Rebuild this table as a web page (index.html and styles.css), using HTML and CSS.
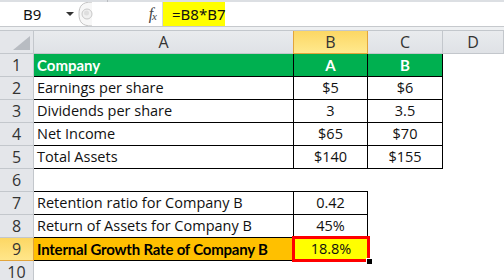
FILE: index.html
```html
<!DOCTYPE html>
<html>
<head>
<meta charset="utf-8">
<link rel="stylesheet" href="styles.css">
</head>
<body>
<div class="ribbon-edge"><span class="ribbon-split"></span></div>
<div class="fbar">
  <div class="namebox"><span class="name">B9</span><span class="drop"></span></div>
  <div class="grip"><svg width="16" height="24" viewBox="0 0 16 24"><path d="M14 0 C4 0 1 4 1 12 C1 20 4 24 14 24" fill="#f7f7f7" stroke="#c4c4c4" stroke-width="1"/><circle cx="9" cy="12" r="5" fill="#f0f0f0" stroke="#c8c8c8"/><circle cx="8.5" cy="11" r="2.5" fill="#dedede"/></svg></div>
  <div class="fxzone"><span class="fx">f<sub>x</sub></span></div>
  <div class="formula">=B8*B7</div>
  <div class="rest"></div>
</div>
<div class="band"></div>
<div class="sheet">
  <div class="corner"><svg width="17" height="14" viewBox="0 0 17 14"><polygon points="17,0 17,14 0,14" fill="#b8bcc2"/></svg></div>
  <div class="ch">A</div>
  <div class="ch sel">B</div>
  <div class="ch">C</div>
  <div class="ch">D</div>

  <div class="rh">1</div>
  <div class="cell tl green bold">Company</div>
  <div class="cell num green bold">A</div>
  <div class="cell num green bold">B</div>
  <div class="cell blank"></div>

  <div class="rh">2</div>
  <div class="cell tl">Earnings per share</div>
  <div class="cell num">$5</div>
  <div class="cell num">$6</div>
  <div class="cell blank"></div>

  <div class="rh">3</div>
  <div class="cell tl">Dividends per share</div>
  <div class="cell num">3</div>
  <div class="cell num">3.5</div>
  <div class="cell blank"></div>

  <div class="rh">4</div>
  <div class="cell tl">Net Income</div>
  <div class="cell num">$65</div>
  <div class="cell num">$70</div>
  <div class="cell blank"></div>

  <div class="rh">5</div>
  <div class="cell tl">Total Assets</div>
  <div class="cell num">$140</div>
  <div class="cell num">$155</div>
  <div class="cell blank"></div>

  <div class="rh">6</div>
  <div class="cell bottom-only"></div>
  <div class="cell bottom-only"></div>
  <div class="cell blank"></div>
  <div class="cell blank"></div>

  <div class="rh">7</div>
  <div class="cell tl">Retention ratio for Company B</div>
  <div class="cell num">0.42</div>
  <div class="cell blank"></div>
  <div class="cell blank"></div>

  <div class="rh">8</div>
  <div class="cell tl">Return of Assets for Company B</div>
  <div class="cell num">45%</div>
  <div class="cell blank"></div>
  <div class="cell blank"></div>

  <div class="rh rsel">9</div>
  <div class="cell tl orange bold">Internal Growth Rate of Company B</div>
  <div class="cell num active">18.8%<span class="handle"></span></div>
  <div class="cell blank"></div>
  <div class="cell blank"></div>

  <div class="rh">10</div>
  <div class="cell blank"></div>
  <div class="cell blank"></div>
  <div class="cell blank"></div>
  <div class="cell blank"></div>
</div>
</body>
</html>
```
FILE: styles.css
```css
html, body {
  margin: 0;
  padding: 0;
  background: #ffffff;
}
body {
  width: 504px;
  height: 280px;
  overflow: hidden;
  font-family: "Open Sans", Lato, sans-serif;
}
.ribbon-edge {
  height: 2px;
  background: #dcdfe3;
  position: relative;
}
.ribbon-split {
  position: absolute;
  left: 107px;
  top: 0;
  width: 1px;
  height: 2px;
  background: #b9bcc0;
}
.fbar {
  display: flex;
  height: 24px;
  border-bottom: 1px solid #c6c9cd;
  background: #ffffff;
}
.namebox {
  width: 78px;
  display: flex;
  align-items: center;
  position: relative;
}
.name {
  font-family: "Noto Sans", sans-serif;
  font-size: 15px;
  color: #111;
  margin-left: 23px;
}
.drop {
  position: absolute;
  left: 66px;
  top: 10px;
  width: 0;
  height: 0;
  border-left: 4px solid transparent;
  border-right: 4px solid transparent;
  border-top: 4px solid #333;
}
.grip {
  width: 16px;
  height: 24px;
}
.grip svg {
  display: block;
}
.fxzone {
  width: 69px;
  background: #ffffff;
  display: flex;
  align-items: center;
  justify-content: flex-end;
  padding-right: 6px;
  box-sizing: border-box;
  border-right: 1px solid #d4d7db;
}
.fx {
  font-family: "Liberation Serif", serif;
  font-style: italic;
  font-size: 16px;
  color: #444;
  letter-spacing: -1px;
}
.fx sub {
  font-size: 11px;
  vertical-align: -1px;
}
.formula {
  width: 62px;
  background: #ffff00;
  font-family: "Noto Sans", sans-serif;
  font-size: 15px;
  line-height: 24px;
  padding-left: 9px;
  box-sizing: border-box;
  color: #111;
}
.rest {
  flex: 1;
}
.band {
  height: 3px;
  background: #eef0f2;
  border-bottom: 1px solid #c3c7cc;
}
.sheet {
  display: grid;
  grid-template-columns: 34px 260px 74px 75px 61px;
  grid-auto-rows: 23px;
}
.sheet > div {
  box-sizing: border-box;
}
.corner {
  background: #e4e6ea;
  border-right: 1px solid #c3c7cc;
  border-bottom: 1px solid #c3c7cc;
  display: flex;
  align-items: flex-end;
  justify-content: flex-end;
  padding: 0 3px 3px 0;
}
.corner svg {
  display: block;
}
.ch {
  background: linear-gradient(#e9ebee, #dfe2e6);
  border-right: 1px solid #c3c7cc;
  border-bottom: 1px solid #c3c7cc;
  text-align: center;
  font-size: 16px;
  line-height: 22px;
  color: #333;
}
.ch.sel {
  background: linear-gradient(#fcd764, #ffe98e);
  border-right: 1px solid #e2a43b;
  border-left: 1px solid #e2a43b;
  border-bottom: 1px solid #e2a43b;
  margin-left: -1px;
}
.rh {
  background: #e4e6ea;
  border-right: 1px solid #c3c7cc;
  border-bottom: 1px solid #c3c7cc;
  text-align: center;
  font-size: 16px;
  line-height: 22px;
  color: #333;
}
.rh.rsel {
  background: linear-gradient(#fcd764, #ffe68a);
  border-bottom: 1px solid #e2a43b;
  border-right: 1px solid #e2a43b;
}
.cell {
  border-right: 1px solid #000;
  border-bottom: 1px solid #000;
  font-size: 14.5px;
  line-height: 22px;
  color: #111;
  white-space: nowrap;
  overflow: visible;
}
.cell.blank {
  border: none;
}
.cell.bottom-only {
  border-right: none;
}
.tl {
  padding-left: 3px;
}
.num {
  text-align: center;
}
.bold {
  font-family: Lato, sans-serif;
  font-size: 15px;
  font-weight: bold;
}
.green {
  background: #00b050;
  color: #ffffff;
}
.orange {
  background: #ffc000;
  color: #000;
  letter-spacing: -0.2px;
}
.active {
  background: #ffff00;
  position: relative;
  border: 3px solid #ff0000;
  margin: -2px -2px -1px -2px;
  line-height: 19px;
}
.handle {
  position: absolute;
  right: -5px;
  bottom: -5px;
  width: 5px;
  height: 5px;
  background: #000;
  border-left: 1px solid #fff;
  border-top: 1px solid #fff;
}
```
